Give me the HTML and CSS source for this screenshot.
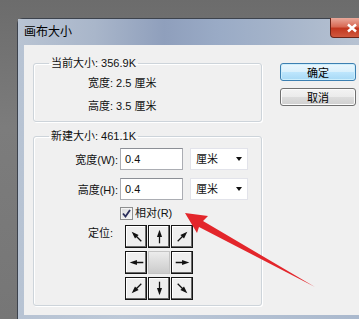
FILE: index.html
```html
<!DOCTYPE html>
<html lang="zh-CN">
<head>
    <meta charset="UTF-8">
    <title>画布大小</title>
    <link rel="stylesheet" href="styles.css">
</head>
<body>
    <svg class="defs" width="0" height="0">
        <symbol id="arr" viewBox="0 0 20 20">
            <path d="M10 18V8" stroke="#111" stroke-width="1.5" fill="none"/>
            <path d="M10 2 7 10.5h6z" fill="#111"/>
        </symbol>
    </svg>

    <div class="window">
        <div class="titlebar">
            <span class="title">画布大小</span>
            <span class="close">
                <svg width="12" height="10" viewBox="0 0 12 10"><path d="M2 1.5 10 8.5M10 1.5 2 8.5" stroke="#fff" stroke-width="2.4"/></svg>
            </span>
        </div>

        <div class="client">
            <div class="groups">
                <!-- current size -->
                <fieldset class="group current">
                    <legend>当前大小: 356.9K</legend>
                    <div class="info">宽度: 2.5 厘米</div>
                    <div class="info">高度: 3.5 厘米</div>
                </fieldset>

                <!-- new size -->
                <fieldset class="group new">
                    <legend>新建大小: 461.1K</legend>
                    <div class="field">
                        <label>宽度(W):</label>
                        <div class="input">0.4</div>
                        <div class="select">厘米<span class="caret"></span></div>
                    </div>
                    <div class="field">
                        <label>高度(H):</label>
                        <div class="input">0.4</div>
                        <div class="select">厘米<span class="caret"></span></div>
                    </div>
                    <div class="check-row">
                        <span class="checkbox">
                            <svg width="9" height="9" viewBox="0 0 9 9"><path d="M1 4.5 3.5 7.5 8 1" stroke="#2b2f5c" stroke-width="1.8" fill="none"/></svg>
                        </span>
                        相对(R)
                    </div>
                    <div class="anchor-row">
                        <span class="anchor-label">定位:</span>
                        <div class="anchor-grid">
                            <div class="cell"><svg class="arr nw"><use href="#arr"/></svg></div>
                            <div class="cell"><svg class="arr n"><use href="#arr"/></svg></div>
                            <div class="cell"><svg class="arr ne"><use href="#arr"/></svg></div>
                            <div class="cell"><svg class="arr w"><use href="#arr"/></svg></div>
                            <div class="cell center"></div>
                            <div class="cell"><svg class="arr e"><use href="#arr"/></svg></div>
                            <div class="cell"><svg class="arr sw"><use href="#arr"/></svg></div>
                            <div class="cell"><svg class="arr s"><use href="#arr"/></svg></div>
                            <div class="cell"><svg class="arr se"><use href="#arr"/></svg></div>
                        </div>
                    </div>
                </fieldset>
            </div>

            <div class="buttons">
                <button class="btn default">确定</button>
                <button class="btn">取消</button>
            </div>
        </div>
    </div>

    <!-- red annotation arrow -->
    <svg class="pointer" width="359" height="319" viewBox="0 0 359 319">
        <path d="M185 213 208 216 203 221 315 287 199 227 197 233Z" fill="#e3262b"/>
    </svg>
</body>
</html>
```

FILE: styles.css
```css
body {
    margin: 0;
    width: 359px;
    height: 319px;
    overflow: hidden;
    background: linear-gradient(#6c6c6c, #7c7c7c 40%, #767676);
    font-family: "Liberation Sans", "Noto Sans CJK SC", sans-serif;
    font-size: 11px;
    color: #111;
    padding: 18px 0 0 17px;
    box-sizing: border-box;
    position: relative;
}

.defs {
    position: absolute;
}

.window {
    width: 342px;
    border: 1px solid #3d434d;
    border-right: none;
    border-radius: 6px 0 0 0;
    padding: 0 0 6px 6px;
    background: linear-gradient(90deg, #b7c3d3 0%, #bdc9d8 30%, #a9b8cd 100%);
}

.titlebar {
    height: 26px;
    display: flex;
    align-items: flex-start;
    background: linear-gradient(90deg, #b9c4d3 0%, #a9b6ca 22%, #8f9fbc 42%, #9aabc6 58%, #a5b4ca 75%, #b8c3d2 100%);
    margin-left: -6px;
    padding-left: 6px;
}

.title {
    font-size: 12px;
    line-height: 26px;
    color: #000;
}

.close {
    margin-left: auto;
    margin-top: -1px;
    margin-right: -7px;
    width: 43px;
    height: 20px;
    box-sizing: border-box;
    border: 1px solid #6b2418;
    border-top: none;
    border-radius: 0 0 4px 4px;
    background: linear-gradient(#e9a99b, #d86a55 45%, #c2371f 55%, #d0583e);
    display: flex;
    align-items: center;
    justify-content: center;
}

.client {
    background: #f0f0f0;
    display: flex;
    padding: 10px 0 10px 9px;
    height: 270px;
    box-sizing: border-box;
}

.groups {
    width: 229px;
    flex-shrink: 0;
}

.group {
    margin: 0;
    padding: 0;
    border: 1px solid #cdd4da;
    border-radius: 3px;
    box-shadow: inset 1px 1px 0 #fff, 1px 1px 0 #fff;
}

.group legend {
    margin-left: 15px;
    padding: 0 2px;
    line-height: 16px;
}

.current {
    padding: 1px 0 3px 0;
}

.info {
    line-height: 23px;
    padding-left: 54px;
}

.new {
    margin-top: 6px;
    padding: 4px 0 5px 0;
}

.field {
    display: flex;
    align-items: center;
    margin-bottom: 8px;
}

.field label {
    width: 84px;
    text-align: right;
    margin-right: 2px;
}

.input {
    width: 63px;
    height: 22px;
    box-sizing: border-box;
    border: 1px solid #abadb3;
    border-top-color: #8c8f96;
    background: #fff;
    padding-left: 4px;
    line-height: 20px;
}

.select {
    width: 58px;
    height: 22px;
    box-sizing: border-box;
    margin-left: 7px;
    border: 1px solid #e2e3ea;
    background: #fff;
    padding-left: 5px;
    line-height: 20px;
    display: flex;
    align-items: center;
}

.caret {
    margin-left: auto;
    margin-right: 5px;
    border-left: 3px solid transparent;
    border-right: 3px solid transparent;
    border-top: 4px solid #111;
}

.check-row {
    display: flex;
    align-items: center;
    margin: -3px 0 0 86px;
    line-height: 16px;
}

.checkbox {
    width: 13px;
    height: 13px;
    box-sizing: border-box;
    border: 1px solid #8e8f8f;
    background: linear-gradient(135deg, #dcdcdc, #f7f7f7);
    box-shadow: inset 0 0 0 1px #f4f4f4;
    display: flex;
    align-items: center;
    justify-content: center;
    margin-right: 2px;
}

.anchor-row {
    display: flex;
    margin-top: 4px;
}

.anchor-label {
    width: 37px;
    padding-left: 54px;
    line-height: 16px;
}

.anchor-grid {
    display: grid;
    grid-template-columns: repeat(3, 22px);
    grid-template-rows: repeat(3, 23px);
    column-gap: 1px;
    row-gap: 3px;
}

.cell {
    border: 1px solid #151515;
    box-shadow: inset -1px -1px 0 #6a6a6a, inset 1px 1px 0 #fff;
    background: #eeeeee;
    display: flex;
    align-items: center;
    justify-content: center;
}

.cell.center {
    border-color: #c4c4c4;
    box-shadow: none;
    background: linear-gradient(#ececec, #cbcbcb);
}

.arr {
    width: 17px;
    height: 17px;
}

.arr.n { transform: rotate(0deg); }
.arr.ne { transform: rotate(45deg); }
.arr.e { transform: rotate(90deg); }
.arr.se { transform: rotate(135deg); }
.arr.s { transform: rotate(180deg); }
.arr.sw { transform: rotate(-135deg); }
.arr.w { transform: rotate(-90deg); }
.arr.nw { transform: rotate(-45deg); }

.buttons {
    margin-left: 18px;
    padding-top: 8px;
    display: flex;
    flex-direction: column;
    gap: 7px;
}

.btn {
    width: 76px;
    height: 18px;
    padding: 0;
    font-family: inherit;
    font-size: 11px;
    color: #000;
    border: 1px solid #707070;
    border-radius: 3px;
    background: linear-gradient(#f3f3f3, #ebebeb 50%, #dddddd 50%, #cfcfcf);
    box-shadow: inset 0 0 0 1px #fcfcfc;
}

.btn.default {
    border-color: #3c7fb1;
    background: linear-gradient(#eaf6fd, #d9f0fc 50%, #bee6fd 50%, #a7d9f5);
    box-shadow: inset 0 0 0 1px #cdeefc;
}

.pointer {
    position: absolute;
    left: 0;
    top: 0;
    pointer-events: none;
}
```
